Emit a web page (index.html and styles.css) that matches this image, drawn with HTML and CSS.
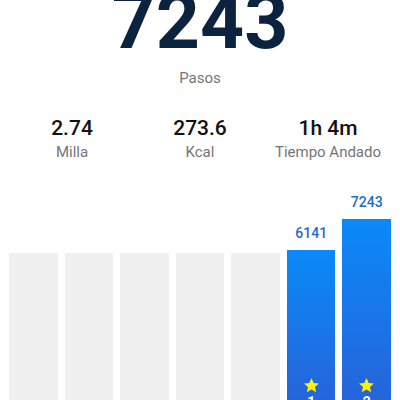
FILE: index.html
```html
<!DOCTYPE html>
<html lang="es">
<head>
  <meta charset="UTF-8" />
  <meta name="viewport" content="width=device-width, initial-scale=1.0"/>
  <title>Pasos</title>
  <link rel="stylesheet" href="styles.css">
</head>
<body>
  <header class="summary">
    <div class="steps">7243</div>
    <div class="steps-label">Pasos</div>
  </header>

  <section class="stats">
    <div class="stat">
      <div class="stat-value">2.74</div>
      <div class="stat-label">Milla</div>
    </div>
    <div class="stat">
      <div class="stat-value">273.6</div>
      <div class="stat-label">Kcal</div>
    </div>
    <div class="stat">
      <div class="stat-value">1h 4m</div>
      <div class="stat-label">Tiempo Andado</div>
    </div>
  </section>

  <section class="chart">
    <div class="day"><div class="bar empty"></div></div>
    <div class="day"><div class="bar empty"></div></div>
    <div class="day"><div class="bar empty"></div></div>
    <div class="day"><div class="bar empty"></div></div>
    <div class="day"><div class="bar empty"></div></div>
    <div class="day">
      <div class="bar-value">6141</div>
      <div class="bar done" style="height: 173px;">
        <svg class="star" viewBox="0 0 24 24"><path d="M12 1.5l3.1 6.9 7.4.7-5.6 5 1.7 7.4L12 17.6l-6.6 3.9 1.7-7.4-5.6-5 7.4-.7z"/></svg>
        <span class="streak">1</span>
      </div>
    </div>
    <div class="day">
      <div class="bar-value">7243</div>
      <div class="bar done" style="height: 204px;">
        <svg class="star" viewBox="0 0 24 24"><path d="M12 1.5l3.1 6.9 7.4.7-5.6 5 1.7 7.4L12 17.6l-6.6 3.9 1.7-7.4-5.6-5 7.4-.7z"/></svg>
        <span class="streak">2</span>
      </div>
    </div>
  </section>
</body>
</html>
```
FILE: styles.css
```css
html, body { margin: 0; height: 400px; overflow: hidden; background: #fff; }
body { font-family: Roboto, "Liberation Sans", sans-serif; padding: 0 8px; }

.summary { display: flex; flex-direction: column; align-items: center; }
.steps { font-size: 77px; line-height: 77px; font-weight: 700; color: #0c2340; margin-top: -16px; }
.steps-label { font-size: 15px; line-height: 20px; color: #757575; margin-top: 7px; }

.stats { display: grid; grid-template-columns: repeat(3, 1fr); margin-top: 27px; }
.stat { display: flex; flex-direction: column; align-items: center; }
.stat-value { font-size: 21px; line-height: 26px; font-weight: 500; color: #111; }
.stat-label { font-size: 15px; line-height: 20px; color: #757575; margin-top: 1px; }

.chart { display: flex; align-items: flex-end; gap: 7px; height: 253px; margin: 8px 1px 0; }
.day { flex: 1; display: flex; flex-direction: column; align-items: stretch; }
.bar-value { font-size: 14px; line-height: 16px; font-weight: 500; color: #1f6bc9; text-align: center; margin-bottom: 9px; }
.bar { height: 170px; }
.bar.empty { background: #f0f0f0; }
.bar.done { background: linear-gradient(#0a8af8, #2a5fd6); display: flex; flex-direction: column; align-items: center; justify-content: flex-end; padding-bottom: 13px; box-sizing: border-box; }
.star { width: 17px; height: 17px; fill: #fff200; }
.streak { font-size: 14px; line-height: 16px; font-weight: 700; color: #fff; }
```
